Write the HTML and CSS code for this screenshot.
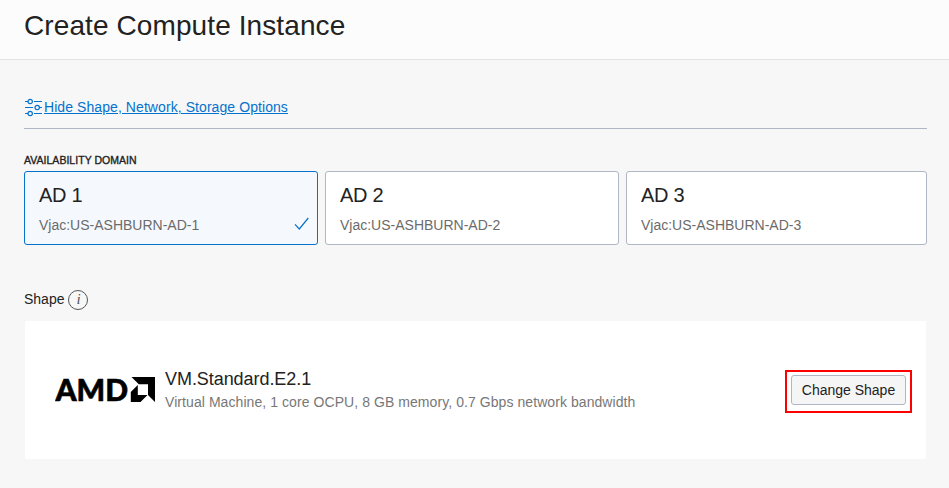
FILE: index.html
```html
<!DOCTYPE html>
<html lang="en">
<head>
<meta charset="utf-8">
<title>Create Compute Instance</title>
<link rel="stylesheet" href="styles.css">
</head>
<body>
<header class="header"><h1 class="title">Create Compute Instance</h1></header>
<main class="content">
  <div class="toggle">
    <svg class="toggle-icon" width="18" height="20" viewBox="0 0 18 20" fill="none" stroke="#0572ce" stroke-width="1">
      <path d="M0 3.5h3M9 3.5H17M0 9.5h8M14.5 9.5H17M0 15.5h3M9 15.5H17"/>
      <g stroke-width="1.2"><circle cx="5.2" cy="3.5" r="2.2"/><circle cx="12.2" cy="9.5" r="2.2"/><circle cx="5.2" cy="15.5" r="2.2"/></g>
    </svg>
    <a class="toggle-link" href="#">Hide Shape, Network, Storage Options</a>
  </div>
  <div class="label">AVAILABILITY DOMAIN</div>
  <div class="domains">
    <div class="card selected">
      <div class="card-name">AD 1</div>
      <div class="card-id">Vjac:US-ASHBURN-AD-1</div>
      <svg class="check" width="16" height="14" viewBox="0 0 16 14" fill="none" stroke="#0572ce" stroke-width="1.2"><path d="M1 7.3L5.3 12L14.3 1"/></svg>
    </div>
    <div class="card">
      <div class="card-name">AD 2</div>
      <div class="card-id">Vjac:US-ASHBURN-AD-2</div>
    </div>
    <div class="card">
      <div class="card-name">AD 3</div>
      <div class="card-id">Vjac:US-ASHBURN-AD-3</div>
    </div>
  </div>
  <div class="shape-label">
    <span class="shape-title">Shape</span>
    <span class="info">i</span>
  </div>
  <section class="shape">
    <svg class="logo" width="100" height="36" viewBox="0 -5 100 36">
      <text class="logo-text" x="0.5" y="23.7" textLength="72.5" lengthAdjust="spacingAndGlyphs">AMD</text>
      <path d="M76.5 0H100V25L93 18V7.3H83.8Z"/>
      <path d="M82.8 8V18H92.5L85.5 25H75.8V15Z"/>
    </svg>
    <div class="shape-info">
      <div class="shape-name">VM.Standard.E2.1</div>
      <div class="shape-desc">Virtual Machine, 1 core OCPU, 8 GB memory, 0.7 Gbps network bandwidth</div>
    </div>
    <div class="highlight"><button class="button">Change Shape</button></div>
  </section>
</main>
</body>
</html>
```
FILE: styles.css
```css
* { box-sizing: border-box; }
body {
  margin: 0;
  height: 488px;
  overflow: hidden;
  background: #f7f7f7;
  color: #222;
  font: 14px/20px "Liberation Sans", Arial, sans-serif;
}
.header {
  height: 60px;
  padding: 8px 24px 0;
  background: #fcfcfc;
  border-bottom: 1px solid #e3e3e3;
}
.title { margin: 0; font-size: 28px; line-height: 36px; font-weight: 400; letter-spacing: 0.1px; }
.content { padding: 36px 22px 0 24px; }
.toggle {
  display: flex;
  height: 33px;
  padding-left: 1px;
  border-bottom: 1px solid #b0b7c4;
}
.toggle-icon { margin: 2px 1px 0 0; }
.toggle-link { color: #0572ce; text-decoration: underline; line-height: 22px; letter-spacing: 0.075px; }
.label {
  margin-top: 24px;
  height: 18px;
  font-size: 10.5px;
  line-height: 15px;
  letter-spacing: 0.03px;
  -webkit-text-stroke: 0.35px #222;
}
.domains { display: grid; grid-template-columns: 294px 294px 301px; gap: 7px; }
.card {
  position: relative;
  height: 74px;
  padding: 11px 14px;
  background: #fff;
  border: 1px solid #b0b7c4;
  border-radius: 3px;
}
.selected { background: #f5f9fe; border-color: #0572ce; }
.card-name { font-size: 20px; line-height: 24px; letter-spacing: -0.3px; }
.card-id { margin-top: 8px; line-height: 20px; color: #6b6b6b; }
.check { position: absolute; right: 7px; bottom: 13px; }
.shape-label { display: flex; gap: 4px; margin-top: 44px; height: 22px; }
.info {
  margin-top: 1px;
  width: 20px;
  height: 20px;
  border: 1px solid #555;
  border-radius: 50%;
  color: #555;
  font: italic 15px/17px "Liberation Serif", serif;
  text-align: center;
}
.shape {
  display: flex;
  align-items: center;
  height: 138px;
  margin: 10px 1px 0;
  padding: 0 14px 0 30px;
  background: #fff;
  border-radius: 2px;
}
.logo { flex: none; fill: #000; }
.logo-text { font: 900 30px Lato, sans-serif; stroke: #000; stroke-width: 0.6px; }
.shape-info { margin-left: 10px; flex: 1; }
.shape-name { font-size: 18px; line-height: 24px; letter-spacing: -0.06px; }
.shape-desc { line-height: 22px; color: #777; letter-spacing: 0.07px; }
.highlight { margin-top: 2px; padding: 3px 4px 6px; width: 127px; height: 43px; border: 2px solid #f00; }
.button {
  width: 115px;
  height: 30px;
  padding: 0;
  background: #f5f5f5;
  border: 1px solid #b0b7c4;
  border-radius: 3px;
  color: #222;
  font: 14px/20px "Liberation Sans", Arial, sans-serif;
}
```
